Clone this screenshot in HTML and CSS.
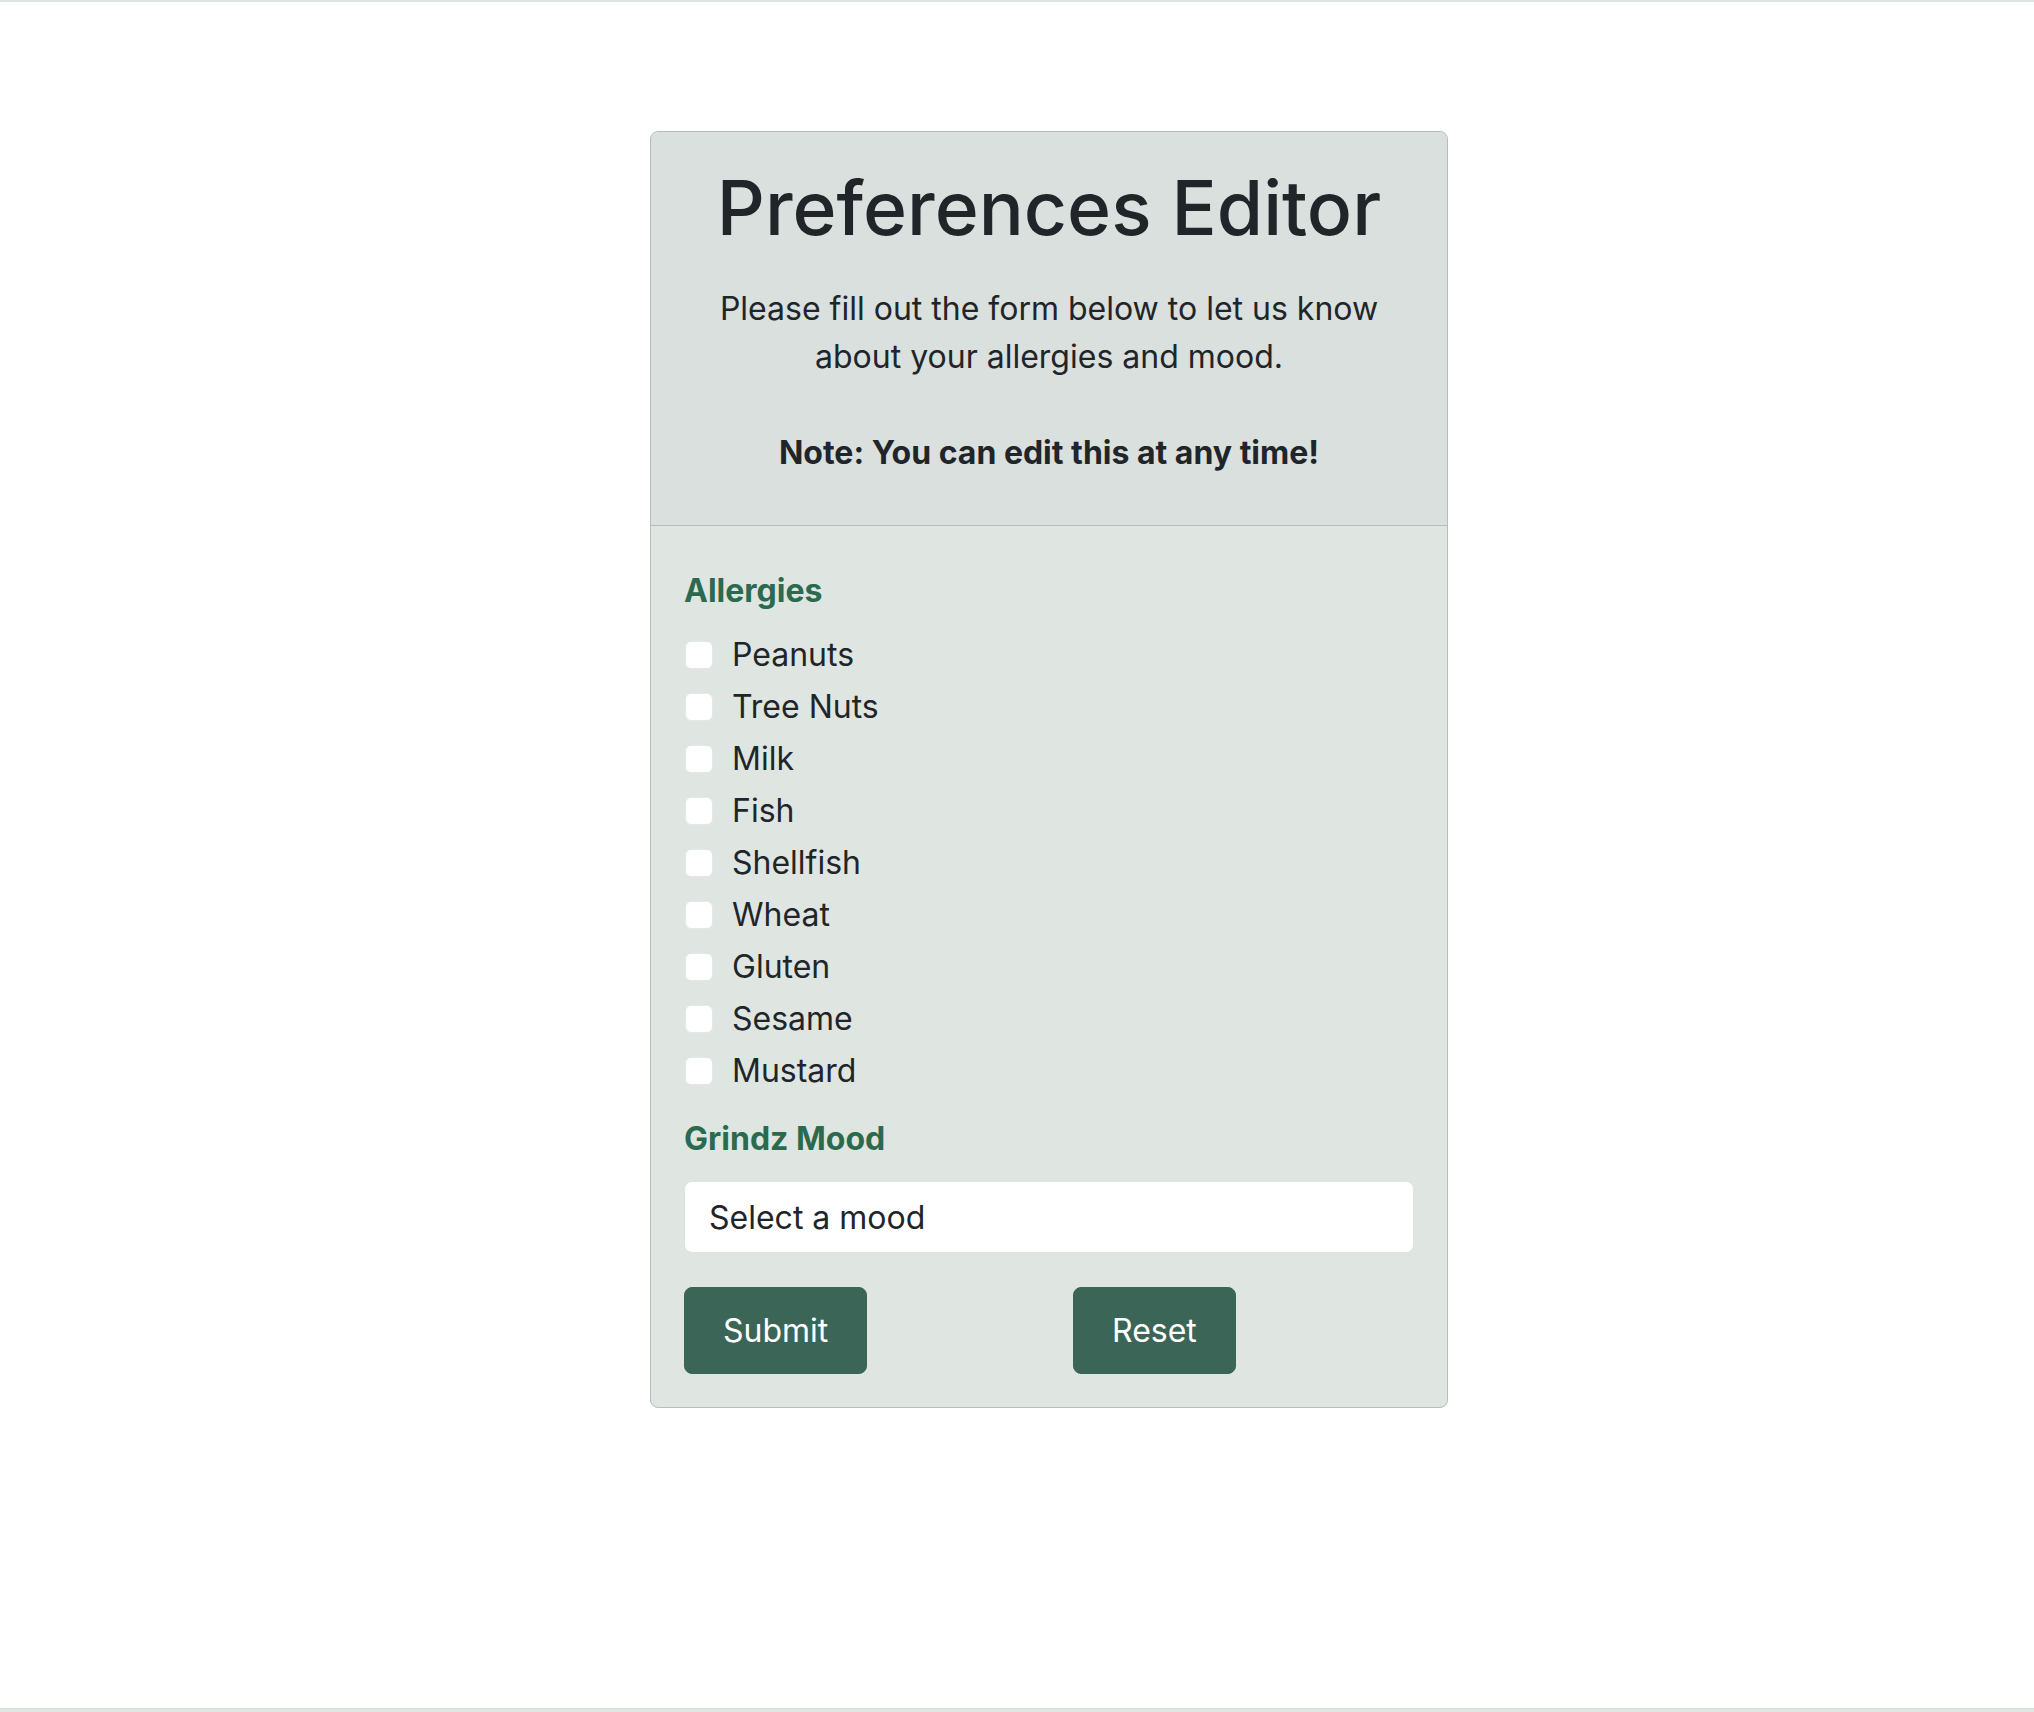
FILE: index.html
```html
<!DOCTYPE html>
<html lang="en">
<head>
<meta charset="utf-8">
<title>Preferences Editor</title>
<link rel="stylesheet" href="styles.css">
</head>
<body>
<div class="topline"></div>
<main class="page">
  <form class="card">
    <header class="card-header">
      <h1 class="title">Preferences Editor</h1>
      <p class="intro">Please fill out the form below to let us know about your allergies and mood.<br><br><strong>Note: You can edit this at any time!</strong></p>
    </header>
    <section class="card-body">
      <h2 class="section-title">Allergies</h2>
      <div class="checks">
        <label class="check"><input type="checkbox" class="check-input"><span>Peanuts</span></label>
        <label class="check"><input type="checkbox" class="check-input"><span>Tree Nuts</span></label>
        <label class="check"><input type="checkbox" class="check-input"><span>Milk</span></label>
        <label class="check"><input type="checkbox" class="check-input"><span>Fish</span></label>
        <label class="check"><input type="checkbox" class="check-input"><span>Shellfish</span></label>
        <label class="check"><input type="checkbox" class="check-input"><span>Wheat</span></label>
        <label class="check"><input type="checkbox" class="check-input"><span>Gluten</span></label>
        <label class="check"><input type="checkbox" class="check-input"><span>Sesame</span></label>
        <label class="check"><input type="checkbox" class="check-input"><span>Mustard</span></label>
      </div>
      <h2 class="section-title mood-title">Grindz Mood</h2>
      <select class="mood-select">
        <option>Select a mood</option>
      </select>
      <div class="actions">
        <div class="action-col"><button type="button" class="btn">Submit</button></div>
        <div class="action-col"><button type="button" class="btn">Reset</button></div>
      </div>
    </section>
  </form>
</main>
<footer class="footer"></footer>
</body>
</html>
```
FILE: styles.css
```css
* { box-sizing: border-box; }
html, body { margin: 0; padding: 0; }
body {
  font-family: Inter, "Noto Sans", "Liberation Sans", sans-serif;
  color: #212529;
  background: #ffffff;
  min-height: 1712px;
  display: flex;
  flex-direction: column;
}
.topline {
  height: 2px;
  background: #dde5e1;
}
.page {
  flex: 1;
  display: flex;
  justify-content: center;
  align-items: flex-start;
  padding: 129px 0 0 64px;
}
.card {
  width: 798px;
  border: 1px solid #b4bfba;
  border-radius: 8px;
  background: #dfe6e2;
  overflow: hidden;
}
.card-header {
  background: #d9e0dd;
  border-bottom: 1px solid #b4bfba;
  padding: 30px 33px 48px;
  text-align: center;
}
.title {
  margin: 0 0 32px;
  font-size: 75px;
  line-height: 91px;
  font-weight: 500;
  letter-spacing: 0;
}
.intro {
  margin: 0;
  font-size: 32px;
  line-height: 48px;
  padding: 0 20px;
}
.intro strong { font-weight: 700; }
.card-body {
  padding: 47px 33px 33px;
}
.section-title {
  margin: 0;
  font-size: 32px;
  line-height: 36px;
  font-weight: 700;
  color: #2b6a4e;
}
.checks {
  margin-top: 22px;
  display: flex;
  flex-direction: column;
  gap: 4px;
}
.check {
  display: flex;
  align-items: center;
  gap: 19px;
  height: 48px;
  font-size: 32px;
  line-height: 48px;
}
.check-input {
  appearance: none;
  -webkit-appearance: none;
  margin: 0 0 0 1px;
  width: 28px;
  height: 28px;
  background: #ffffff;
  border: 1px solid #e3e7ea;
  border-radius: 6px;
  flex: none;
}
.mood-title { margin-top: 26px; }
.mood-select {
  display: block;
  width: 100%;
  margin-top: 24px;
  height: 72px;
  padding: 0 72px 0 24px;
  font-family: inherit;
  font-size: 32px;
  color: #212529;
  background: #ffffff;
  border: 1px solid #dfe3e7;
  border-radius: 8px;
  appearance: none;
  -webkit-appearance: none;
}
.actions {
  margin-top: 34px;
  display: grid;
  grid-template-columns: 1fr 1fr;
  column-gap: 48px;
}
.btn {
  height: 87px;
  padding: 0 38px;
  font-family: inherit;
  font-size: 32px;
  color: #ffffff;
  background: #3b6657;
  border: 1px solid #3b6657;
  border-radius: 8px;
}
.footer {
  height: 4px;
  background: #dfe6e2;
  border-top: 1px solid #d3dbd7;
}
```
